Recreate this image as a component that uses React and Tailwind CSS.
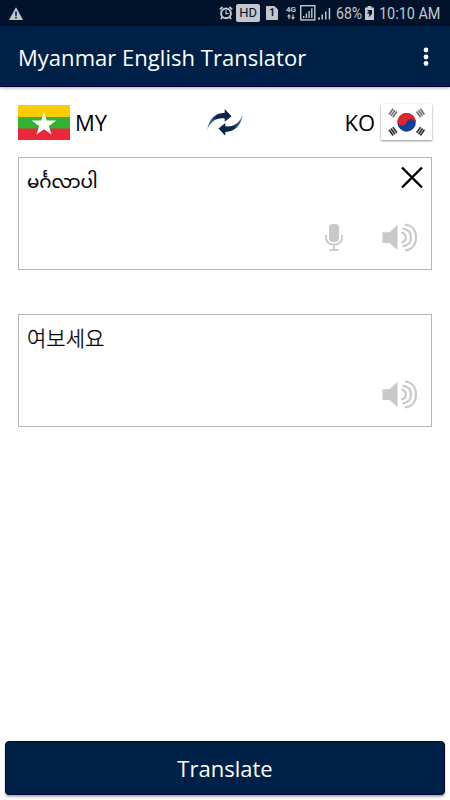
import React from "react";

function StatusBar() {
  return (
    <div className="flex h-[26px] shrink-0 items-center bg-[#00132b] text-[#c3c7cd] font-[Roboto,sans-serif]">
      <svg className="ml-[9px] h-[13px] w-[14px]" viewBox="0 0 14 13">
        <path d="M7 .3 14 13H0Z" fill="#c3c7cd" />
        <path d="M7 4.5v4.2M7 9.8v1.6" stroke="#00132b" strokeWidth="1.5" />
      </svg>
      <svg className="ml-[196px] h-[14px] w-[14px]" viewBox="0 0 14 14" fill="none" stroke="#c3c7cd">
        <circle cx="7" cy="7.3" r="4.9" strokeWidth="2" />
        <path d="M.8 3.4 3.6 1M13.2 3.4 10.4 1M3.4 11.2 1.8 13M10.6 11.2l1.6 1.8" strokeWidth="1.7" />
        <path d="M7 4.2v3.4h2.6" strokeWidth="1.2" />
      </svg>
      <span className="ml-[3px] flex h-[18px] w-[24px] items-center justify-center rounded-[2px] bg-[#c3c7cd] text-[12px] leading-none text-[#00132b]"><span className="block scale-x-[1.08]">HD</span></span>
      <span className="ml-[6px] flex h-[14px] w-[12px] items-center justify-center rounded-[1px] bg-[#c3c7cd] text-[10px] font-bold leading-none text-[#00132b] [clip-path:polygon(0_0,70%_0,100%_25%,100%_100%,0_100%)]">1</span>
      <span className="ml-[7px] flex w-[12px] flex-col items-center">
        <span className="text-[8px] font-bold leading-[8px]">4G</span>
        <svg className="h-[6px] w-[8px]" viewBox="0 0 8 6" fill="#c3c7cd">
          <path d="M0 2.5 2 0l2 2.5H2.6V5H1.4V2.5ZM4 3.2h1.4V.5h1.2v2.7H8L6 5.8Z" />
        </svg>
      </span>
      <svg className="ml-[3px] h-[16px] w-[32px]" viewBox="0 0 32 16" fill="#c3c7cd">
        <rect x=".7" y=".7" width="14.1" height="14.2" fill="none" stroke="#c3c7cd" strokeWidth="1.4" />
        <path d="M3 11h1.4v2H3ZM5.7 8.5h1.4V13H5.7ZM8.4 6h1.4v7H8.4ZM11.1 3.2h1.4V13h-1.4ZM18 12.5h2V14.5h-2ZM21.5 9.5H23v5h-1.5ZM25 6.5h1.5v8H25ZM28.7 3h1.5v11.5h-1.5Z" />
      </svg>
      <span className="ml-[4px] w-[27px] whitespace-nowrap pt-[1px] text-[16px] leading-none"><span className="block origin-left scale-x-[.88]">68%</span></span>
      <svg className="ml-[2px] h-[14px] w-[9px]" viewBox="0 0 9 14">
        <path d="M0 1.5h2.5V0h4v1.5H9V14H0Z" fill="#c3c7cd" />
        <path d="M2 4h5v4L3.500 11.500 4.500 8 1.500 7 4 6Z" fill="#00132b" />
      </svg>
      <span className="ml-[5px] whitespace-nowrap pt-[1px] text-[16px] leading-none"><span className="block origin-left scale-x-[.9]">10:10 AM</span></span>
    </div>
  );
}

function MyanmarFlag() {
  return (
    <svg className="h-[35px] w-[52px]" viewBox="0 0 52 35">
      <path d="M0 0h52v12H0Z" fill="#fecb00" />
      <path d="M0 12h52v12H0Z" fill="#34b233" />
      <path d="M0 23.5h52V35H0Z" fill="#ea2839" />
      <path d="m26 7 2.8 8.4h9.5l-7.5 5.5 2.8 8.7-7.6-5.3-7.6 5.3 2.8-8.7-7.5-5.5h9.5Z" fill="#fff" />
    </svg>
  );
}

function KoreaFlag() {
  return (
    <svg className="h-[36px] w-[51px] bg-white shadow-[0_1px_2px_rgba(0,0,0,.45)]" viewBox="0 0 51 36">
      <g transform="translate(25.6 18.3) rotate(18)">
        <circle r="9.3" fill="#123f9b" />
        <path d="M-9.3 0A9.3 9.3 0 0 1 9.3 0A4.65 4.65 0 0 0 0 0A4.65 4.65 0 0 1-9.3 0Z" fill="#e0262e" />
      </g>
      <g stroke="#333" strokeWidth="1.7">
        <path d="M-2.300-3.500v7M0-3.500v7M2.300-3.500v7" strokeOpacity=".7" transform="translate(12 9) rotate(35)" />
        <path d="M-2.300-3.500v7M0-3.500v7M2.300-3.500v7" strokeOpacity=".7" transform="translate(39.500 9) rotate(-35)" />
        <path d="M-2.300-3.500v7M0-3.500v7M2.300-3.500v7" transform="translate(12 27.300) rotate(-35)" />
        <path d="M-2.300-3.500v7M0-3.500v7M2.300-3.500v7" transform="translate(39.500 27.300) rotate(35)" />
      </g>
    </svg>
  );
}

function Swap() {
  return (
    <svg className="h-[28px] w-[38px]" viewBox="0 0 38 28">
      <defs>
        <linearGradient id="swapTop"><stop offset="0" stopColor="#5689ba" /><stop offset=".4" stopColor="#0a2547" /></linearGradient>
        <linearGradient id="swapBottom"><stop offset=".6" stopColor="#0a2547" /><stop offset="1" stopColor="#5689ba" /></linearGradient>
      </defs>
      <path d="M1.300 22C2.500 12 8.500 5 18.700 4.800V1L25.500 8.300 18.700 13.800V10.500C11 9.500 4.500 13 1.300 22Z" fill="url(#swapTop)" />
      <path d="M36.800 6.500C35.500 16.500 29.500 23.800 19.300 24V27.800L12.500 20.500 19.300 15V18.300C27 19.300 33.500 15.500 36.800 6.500Z" fill="url(#swapBottom)" />
    </svg>
  );
}

function Mic() {
  return (
    <svg className="h-[29px] w-[18px]" viewBox="0 0 18 29" fill="none" stroke="#c8c8c8">
      <rect x="4" y="1" width="10" height="18" rx="4" fill="#c8c8c8" stroke="none" />
      <path d="M1 12v2.5c0 4.5 3 7 8 7s8-2.5 8-7V12M9 21.5V27" strokeWidth="1.8" />
      <path d="M4.5 27h9" strokeWidth="1.8" />
    </svg>
  );
}

function Speaker() {
  return (
    <svg className="h-[29px] w-[36px]" viewBox="0 0 36 29" fill="none" stroke="#c8c8c8" strokeWidth="2.1">
      <path d="M.5 9.3h7L15.500 2v25L7.500 20h-7Z" fill="#c8c8c8" stroke="none" />
      <path d="M19.300 9.500c3 .7 4.500 2.500 4.500 5s-1.500 4.300-4.500 5M20.500 5.500c5.500.8 8.500 4.300 8.500 9s-3 8.200-8.500 9M23 1.500c7.200.6 11 6 11 13s-3.800 12.400-11 13" />
    </svg>
  );
}

export default function App() {
  return (
    <div className="flex h-[800px] w-[450px] flex-col overflow-hidden bg-white font-['Noto_Sans',sans-serif] text-black">
      <StatusBar />
      <header className="flex h-[61px] shrink-0 items-center justify-between border-b border-[#000038] bg-[#002147] pl-[18px] pr-[21px] text-white shadow-[0_1px_3px_rgba(0,0,0,.35)]">
        <h1 className="whitespace-nowrap pt-[1px] font-['Open_Sans',sans-serif] text-[22px] leading-none tracking-[0.03px]">Myanmar English Translator</h1>
        <svg className="h-[20px] w-[6px]" viewBox="0 0 6 20" fill="#fff">
          <circle cx="3" cy="4" r="2.4" /><circle cx="3" cy="11" r="2.4" /><circle cx="3" cy="17.5" r="2.4" />
        </svg>
      </header>
      <main className="flex flex-1 flex-col px-[18px]">
        <div className="mt-[17px] grid h-[36px] grid-cols-[1fr_38px_1fr] items-center font-['Open_Sans',sans-serif] text-[22px] leading-none">
          <div className="flex items-center gap-[5px]"><MyanmarFlag /><span>MY</span></div>
          <Swap />
          <div className="flex items-center justify-end gap-[6px]"><span>KO</span><KoreaFlag /></div>
        </div>
        <section className="mt-[17px] flex h-[113px] flex-col justify-between border border-[#b5b5b5] pl-[8px]">
          <div className="flex items-start justify-between pr-[8px] pt-[8px]">
            <p className="pt-[4px] font-['Noto_Sans_Myanmar','Noto_Sans',sans-serif] text-[18.3px] leading-[28px] [-webkit-text-stroke:0.15px_#000]">မင်္ဂလာပါ</p>
            <svg className="h-[23px] w-[22px]" viewBox="0 0 22 23" stroke="#000" strokeWidth="2.4"><path d="m1 1.5 20 20M21 1.5l-20 20" /></svg>
          </div>
          <div className="mb-[17px] flex items-center justify-end gap-[39px] pr-[13px]"><Mic /><Speaker /></div>
        </section>
        <section className="mt-[44px] flex h-[113px] flex-col justify-between border border-[#b5b5b5] pl-[8px]">
          <p className="pt-[8px] font-['Noto_Sans_CJK_KR',sans-serif] text-[21px] font-light leading-[28px] [-webkit-text-stroke:0.3px_#000]">여보세요</p>
          <div className="mb-[17px] flex justify-end pr-[13px]"><Speaker /></div>
        </section>
      </main>
      <button className="mx-[5px] mb-[5px] h-[54px] shrink-0 rounded-[4px] border border-[#000433] bg-[#002147] pb-[1px] font-['Open_Sans',sans-serif] text-[22px] leading-none text-white shadow-[0_2px_2px_rgba(0,0,0,.3)]">Translate</button>
    </div>
  );
}
